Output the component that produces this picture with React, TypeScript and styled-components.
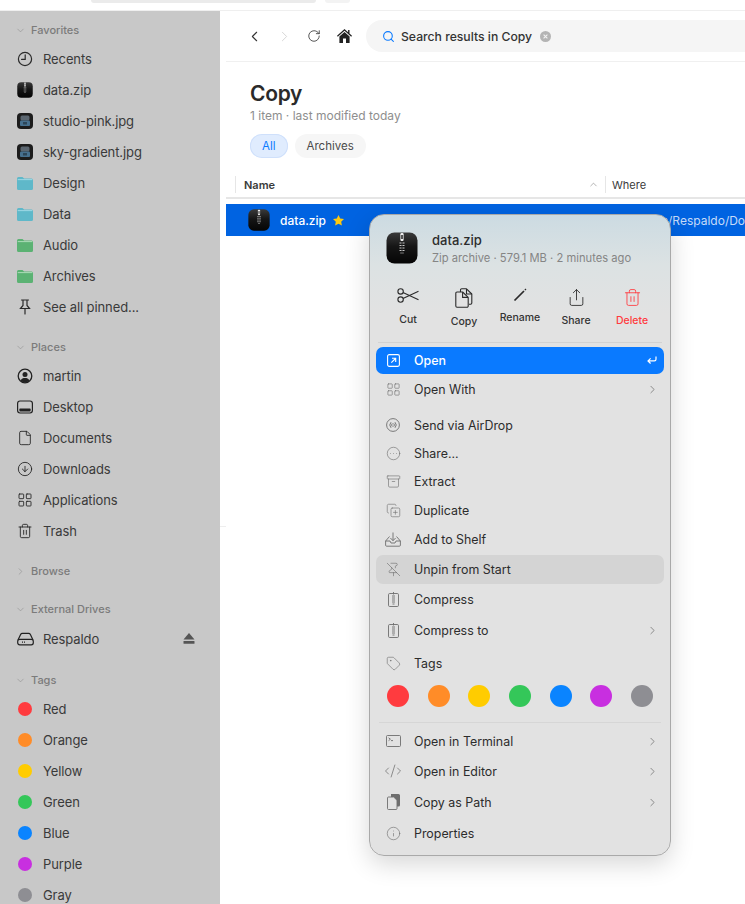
import styled, { createGlobalStyle } from "styled-components";
import {
  ArrowDownCircle,
  Archive,
  ChevronDown,
  ChevronLeft,
  ChevronRight,
  ChevronUp,
  CircleEllipsis,
  CodeXml,
  CopyPlus,
  File,
  Info,
  LayoutGrid,
  PinOff,
  RotateCw,
  Search,
  Share,
  Tag,
  Trash2,
} from "lucide-react";
import type { ReactNode } from "react";

const TAG_COLORS = ["#ff3b3f", "#ff8c28", "#ffcc00", "#34c759", "#0a84ff", "#c82fe0", "#8e8e93"];

const ZipIcon = ({ size }: { size: number }) => (
  <svg width={size} height={size} viewBox="0 0 32 32">
    <defs>
      <linearGradient id={`zip${size}`} x1="0" y1="0" x2="0" y2="1">
        <stop offset="0" stopColor="#3a3a3a" />
        <stop offset="0.45" stopColor="#161616" />
        <stop offset="1" stopColor="#050505" />
      </linearGradient>
    </defs>
    <rect x="0.5" y="0.5" width="31" height="31" rx="8" fill={`url(#zip${size})`} />
    <rect x="14.4" y="1" width="3.2" height="8" rx="1.2" fill="#f2f2f2" />
    <rect x="15" y="3" width="2" height="4" fill="#555" />
    <path d="M13.5 11h5M13.5 13.5h5M13.5 16h5M13.5 18.5h5M14.5 21h3" stroke="#c8c8c8" strokeWidth="1.1" />
    <path d="M16 10v12" stroke="#222" strokeWidth="1" />
  </svg>
);

const ImageFileIcon = () => (
  <svg width="16" height="16" viewBox="0 0 16 16">
    <rect x="0" y="0" width="16" height="16" rx="4" fill="#1c1c1c" />
    <rect x="3.5" y="2.5" width="9" height="5" rx="1.5" fill="#5b6670" />
    <rect x="3" y="7.5" width="10" height="5.5" rx="1" fill="#46708f" />
    <rect x="6" y="9" width="4" height="2.5" fill="#2d4659" />
  </svg>
);

const FolderIcon = ({ color, light }: { color: string; light: string }) => (
  <svg width="16" height="14" viewBox="0 0 16 14">
    <path d="M0 2.5A1.5 1.5 0 0 1 1.5 1h4l1.6 1.5h7.4A1.5 1.5 0 0 1 16 4v8.5a1.5 1.5 0 0 1-1.5 1.5h-13A1.5 1.5 0 0 1 0 12.5z" fill={color} />
    <rect x="0.7" y="3.2" width="14.6" height="0.9" fill={light} />
  </svg>
);

const ClockIcon = () => (
  <svg width="16" height="16" viewBox="0 0 16 16" fill="none" stroke="#2a2a2a" strokeWidth="1.2">
    <circle cx="8" cy="8" r="6.6" />
    <path d="M8.2 3.8v4.6H4.6" strokeLinecap="round" />
  </svg>
);

const PinIcon = () => (
  <svg width="14" height="16" viewBox="0 0 14 16" fill="none" stroke="#2a2a2a" strokeWidth="1.2" strokeLinecap="round">
    <path d="M3.5 1h7M5 1v5.5L2.5 9.5h9L9 6.5V1M7 9.5V15" />
  </svg>
);

const UserIcon = () => (
  <svg width="16" height="16" viewBox="0 0 16 16">
    <circle cx="8" cy="8" r="6.8" fill="none" stroke="#222" strokeWidth="1.3" />
    <circle cx="8" cy="6.4" r="2.5" fill="#222" />
    <path d="M3.6 12.6C4.6 10.6 6 10 8 10s3.4.6 4.4 2.6A6.4 6.4 0 0 1 8 14.6a6.4 6.4 0 0 1-4.4-2z" fill="#222" />
  </svg>
);

const DesktopIcon = () => (
  <svg width="16" height="14" viewBox="0 0 16 14" fill="none" stroke="#222" strokeWidth="1.2">
    <rect x="0.6" y="1" width="14.8" height="12" rx="2.4" />
    <rect x="2.4" y="8.6" width="11.2" height="2.8" rx="0.6" fill="#222" stroke="none" />
  </svg>
);

const DriveIcon = () => (
  <svg width="17" height="14" viewBox="0 0 17 14" fill="none" stroke="#222" strokeWidth="1.2">
    <path d="M1 8l2.6-5.6A2 2 0 0 1 5.4 1.3h6.2a2 2 0 0 1 1.8 1.1L16 8" />
    <rect x="0.7" y="7.4" width="15.6" height="5.4" rx="2" />
    <path d="M5 10.2h4" strokeDasharray="1 1" />
  </svg>
);

const EjectIcon = () => (
  <svg width="12" height="11" viewBox="0 0 12 11" fill="#555">
    <path d="M6 0l5.5 6.4H.5z" />
    <rect x="0.5" y="8" width="11" height="2.8" rx="0.6" />
  </svg>
);

const HomeIcon = () => (
  <svg width="15" height="14" viewBox="0 0 15 14" fill="#222">
    <path d="M7.5 0L0 6.8l.8.9 6.7-6 6.7 6 .8-.9-2.5-2.3V1h-1.4v2.2z" />
    <path d="M2.4 7.6L7.5 3l5.1 4.6V14H9V9.6H6V14H2.4z" />
  </svg>
);

const ClearIcon = () => (
  <svg width="11" height="11" viewBox="0 0 11 11">
    <circle cx="5.5" cy="5.5" r="5.5" fill="#b4b4b4" />
    <path d="M3.6 3.6l3.8 3.8M7.4 3.6L3.6 7.4" stroke="#f2f2f2" strokeWidth="1.1" />
  </svg>
);

const StarIcon = () => (
  <svg width="11" height="11" viewBox="0 0 11 11" fill="#ffc90e">
    <path d="M5.5 0l1.7 3.6 3.8.5-2.8 2.6.7 3.9-3.4-1.9-3.4 1.9.7-3.9L0 4.1l3.8-.5z" />
  </svg>
);

const ScissorsIcon = () => (
  <svg width="22" height="15" viewBox="0 0 22 15" fill="none" stroke="#2a2a2a" strokeWidth="1.1">
    <circle cx="3.6" cy="3.4" r="2.7" />
    <circle cx="3.6" cy="11.6" r="2.7" />
    <path d="M6 4.6l15.5 7.2M6 10.400l15.5-7.200" />
  </svg>
);

const CopyLargeIcon = () => (
  <svg width="18" height="20" viewBox="0 0 18 20" fill="none" stroke="#2a2a2a" strokeWidth="1.1" strokeLinejoin="round">
    <path d="M5.5 4V2a1.2 1.2 0 0 1 1.2-1.2h4.8L16.8 6v9a1.2 1.2 0 0 1-1.2 1.2H14" />
    <path d="M11.5 1v5h5.2" />
    <path d="M2 4h5.6l5.6 5.4v8.6a1.2 1.2 0 0 1-1.2 1.2H2A1.2 1.2 0 0 1 .8 18V5.2A1.2 1.2 0 0 1 2 4z" fill="#e2e2e2" />
    <path d="M7.6 4.2v5.2h5.4" />
  </svg>
);

const PencilIcon = () => (
  <svg width="14" height="14" viewBox="0 0 14 14" fill="none" stroke="#2a2a2a">
    <path d="M1.5 12.5L11 3" strokeWidth="1.7" />
    <path d="M11.8 2.2L13 1" strokeWidth="1.2" />
  </svg>
);

const OpenBoxIcon = () => (
  <svg width="13" height="13" viewBox="0 0 13 13" fill="none" stroke="#fff" strokeWidth="1.1">
    <rect x="0.6" y="0.6" width="11.8" height="11.8" rx="1.6" />
    <path d="M4.3 8.7l4.2-4.2M5 4.3h3.7V8" />
  </svg>
);

const ReturnIcon = () => (
  <svg width="10" height="9" viewBox="0 0 10 9" fill="none" stroke="#fff" strokeWidth="1.2">
    <path d="M9 .5v2.8a1.6 1.6 0 0 1-1.6 1.6H1.2M3.6 2.4L1 4.9l2.6 2.6" />
  </svg>
);

const AirDropIcon = () => (
  <svg width="14" height="14" viewBox="0 0 14 14" fill="none" stroke="#6e6e6e" strokeWidth="0.9">
    <circle cx="7" cy="7" r="6.4" />
    <path d="M5 4.2a4.2 4.2 0 0 0 0 5.6M9 4.2a4.2 4.2 0 0 1 0 5.6M6.3 5.4a2.4 2.4 0 0 0 0 3.2M7.7 5.4a2.4 2.4 0 0 1 0 3.2" />
  </svg>
);

const ShelfIcon = () => (
  <svg width="16" height="15" viewBox="0 0 16 15" fill="none" stroke="#6e6e6e" strokeWidth="0.9">
    <path d="M4.5 4.5L.6 9v4.2a1 1 0 0 0 1 1h12.8a1 1 0 0 0 1-1V9l-3.9-4.5" />
    <path d="M.6 9h4.4l1 2h4l1-2h4.4M8 .5v8M5.4 6L8 8.7 10.6 6" />
  </svg>
);

const CompressIcon = () => (
  <svg width="11" height="15" viewBox="0 0 11 15" fill="none" stroke="#6e6e6e" strokeWidth="0.9">
    <rect x="0.5" y="1.5" width="10" height="13" rx="1.2" />
    <path d="M5.5 0v2.5M4 4h3M4 6h3M4 8h3M4 10h3M4.5 12h2" />
  </svg>
);

const TerminalIcon = () => (
  <svg width="15" height="12" viewBox="0 0 15 12" fill="none" stroke="#6e6e6e" strokeWidth="0.9">
    <rect x="0.5" y="0.5" width="14" height="11" rx="1" />
    <path d="M2.6 2.8l1.8 1.4-1.8 1.4M5 5.6h2" />
  </svg>
);

const CopyPathIcon = () => (
  <svg width="13" height="16" viewBox="0 0 13 16">
    <path d="M4 0h7.5A1.5 1.5 0 0 1 13 1.5V11a1.5 1.5 0 0 1-1.5 1.500H4z" fill="#6e6e6e" />
    <path d="M1.500 3h5.200L10 6.300v8.200a1 1 0 0 1-1 1H1.500a1 1 0 0 1-1-1V4a1 1 0 0 1 1-1z" fill="#e2e2e2" stroke="#6e6e6e" strokeWidth="0.9" />
  </svg>
);

const menuIcon = { size: 15, strokeWidth: 1, color: "#6e6e6e" };
const sideIcon = { size: 16, strokeWidth: 1.3, color: "#222" };

const favorites: { label: string; icon: ReactNode }[] = [
  { label: "Recents", icon: <ClockIcon /> },
  { label: "data.zip", icon: <ZipIcon size={16} /> },
  { label: "studio-pink.jpg", icon: <ImageFileIcon /> },
  { label: "sky-gradient.jpg", icon: <ImageFileIcon /> },
  { label: "Design", icon: <FolderIcon color="#5fb8c9" light="#a5dbe6" /> },
  { label: "Data", icon: <FolderIcon color="#5fb8c9" light="#a5dbe6" /> },
  { label: "Audio", icon: <FolderIcon color="#5bb273" light="#b5e0c0" /> },
  { label: "Archives", icon: <FolderIcon color="#5bb273" light="#b5e0c0" /> },
  { label: "See all pinned...", icon: <PinIcon /> },
];

const places: { label: string; icon: ReactNode }[] = [
  { label: "martin", icon: <UserIcon /> },
  { label: "Desktop", icon: <DesktopIcon /> },
  { label: "Documents", icon: <File {...sideIcon} /> },
  { label: "Downloads", icon: <ArrowDownCircle {...sideIcon} /> },
  { label: "Applications", icon: <LayoutGrid {...sideIcon} /> },
  { label: "Trash", icon: <Trash2 {...sideIcon} /> },
];

const tags = ["Red", "Orange", "Yellow", "Green", "Blue", "Purple", "Gray"];

const upperRows: { label: string; icon: ReactNode; h: number; top?: number; arrow?: boolean; hover?: boolean }[] = [
  { label: "Open With", icon: <LayoutGrid {...menuIcon} />, h: 30, arrow: true },
  { label: "Send via AirDrop", icon: <AirDropIcon />, h: 28, top: 7 },
  { label: "Share...", icon: <CircleEllipsis {...menuIcon} />, h: 28 },
  { label: "Extract", icon: <Archive {...menuIcon} />, h: 28 },
  { label: "Duplicate", icon: <CopyPlus {...menuIcon} />, h: 30 },
  { label: "Add to Shelf", icon: <ShelfIcon />, h: 28 },
  { label: "Unpin from Start", icon: <PinOff {...menuIcon} />, h: 29, top: 2, hover: true },
  { label: "Compress", icon: <CompressIcon />, h: 30 },
  { label: "Compress to", icon: <CompressIcon />, h: 32, arrow: true },
  { label: "Tags", icon: <Tag {...menuIcon} />, h: 34 },
];

const lowerRows: { label: string; icon: ReactNode; h: number; arrow?: boolean }[] = [
  { label: "Open in Terminal", icon: <TerminalIcon />, h: 28, arrow: true },
  { label: "Open in Editor", icon: <CodeXml size={18} strokeWidth={1} color="#6e6e6e" />, h: 32, arrow: true },
  { label: "Copy as Path", icon: <CopyPathIcon />, h: 30, arrow: true },
  { label: "Properties", icon: <Info {...menuIcon} />, h: 32 },
];

const App = () => {
  return (
    <Page>
      <GlobalStyle />
      <TopStrip>
        <TabShape />
        <TabDot />
      </TopStrip>
      <Body>
        <Sidebar>
          <SectionHeader>
            <ChevronDown size={11} strokeWidth={1.2} color="#8a8a8a" />
            Favorites
          </SectionHeader>
          {favorites.map((item) => (
            <SideRow key={item.label}>
              <SideIcon>{item.icon}</SideIcon>
              {item.label}
            </SideRow>
          ))}
          <SectionHeader $gap={13}>
            <ChevronDown size={11} strokeWidth={1.2} color="#8a8a8a" />
            Places
          </SectionHeader>
          {places.map((item) => (
            <SideRow key={item.label}>
              <SideIcon>{item.icon}</SideIcon>
              {item.label}
            </SideRow>
          ))}
          <SectionHeader $gap={13}>
            <ChevronRight size={11} strokeWidth={1.2} color="#8a8a8a" />
            Browse
          </SectionHeader>
          <SectionHeader $gap={14} $after={2}>
            <ChevronDown size={11} strokeWidth={1.2} color="#8a8a8a" />
            External Drives
          </SectionHeader>
          <SideRow>
            <SideIcon>
              <DriveIcon />
            </SideIcon>
            Respaldo
            <Eject>
              <EjectIcon />
            </Eject>
          </SideRow>
          <SectionHeader $gap={14}>
            <ChevronDown size={11} strokeWidth={1.2} color="#8a8a8a" />
            Tags
          </SectionHeader>
          {tags.map((tag, index) => (
            <SideRow key={tag}>
              <SideIcon>
                <SideDot $color={TAG_COLORS[index]} />
              </SideIcon>
              {tag}
            </SideRow>
          ))}
        </Sidebar>
        <Main>
          <Toolbar>
            <NavButton>
              <ChevronLeft size={17} strokeWidth={1.5} color="#333" />
            </NavButton>
            <NavButton>
              <ChevronRight size={17} strokeWidth={1.2} color="#d0d0d0" />
            </NavButton>
            <NavButton>
              <RotateCw size={14} strokeWidth={1.4} color="#333" />
            </NavButton>
            <NavButton>
              <HomeIcon />
            </NavButton>
            <SearchBox>
              <Search size={13} strokeWidth={2} color="#0a7aff" />
              <SearchText>Search results in Copy</SearchText>
              <ClearIcon />
            </SearchBox>
          </Toolbar>
          <Heading>
            <Title>Copy</Title>
            <Subtitle>1 item · last modified today</Subtitle>
            <Chips>
              <Chip $active>All</Chip>
              <Chip>Archives</Chip>
            </Chips>
          </Heading>
          <TableHeader>
            <NameColumn>
              Name
              <SortIcon>
                <ChevronUp size={11} strokeWidth={1.2} color="#777" />
              </SortIcon>
            </NameColumn>
            <WhereColumn>Where</WhereColumn>
          </TableHeader>
          <SelectedRow>
            <NameCell>
              <ZipIcon size={22} />
              <FileName>data.zip</FileName>
              <StarIcon />
            </NameCell>
            <WhereCell>/Volumes/Respaldo/Documents</WhereCell>
          </SelectedRow>
        </Main>
      </Body>
      <Menu>
        <MenuHeader>
          <ZipIcon size={32} />
          <div>
            <MenuFileName>data.zip</MenuFileName>
            <MenuFileMeta>Zip archive · 579.1 MB · 2 minutes ago</MenuFileMeta>
          </div>
        </MenuHeader>
        <Actions>
          <Action>
            <ActionIcon $h={25}>
              <ScissorsIcon />
            </ActionIcon>
            Cut
          </Action>
          <Action>
            <ActionIcon $h={27}>
              <CopyLargeIcon />
            </ActionIcon>
            Copy
          </Action>
          <Action>
            <ActionIcon $h={23}>
              <PencilIcon />
            </ActionIcon>
            Rename
          </Action>
          <Action>
            <ActionIcon $h={26}>
              <Share size={19} strokeWidth={1.1} color="#2a2a2a" />
            </ActionIcon>
            Share
          </Action>
          <Action $danger>
            <ActionIcon $h={26}>
              <Trash2 size={19} strokeWidth={1.1} color="#ff3b3f" />
            </ActionIcon>
            Delete
          </Action>
        </Actions>
        <MenuDivider />
        <OpenRow>
          <RowIcon>
            <OpenBoxIcon />
          </RowIcon>
          Open
          <RowEnd>
            <ReturnIcon />
          </RowEnd>
        </OpenRow>
        {upperRows.map((row) => (
          <MenuRow key={row.label} $h={row.h} $top={row.top} $hover={row.hover}>
            <RowIcon>{row.icon}</RowIcon>
            {row.label}
            {row.arrow && (
              <RowEnd>
                <ChevronRight size={13} strokeWidth={1.3} color="#666" />
              </RowEnd>
            )}
          </MenuRow>
        ))}
        <TagDots>
          {TAG_COLORS.map((color) => (
            <TagDot key={color} $color={color} />
          ))}
        </TagDots>
        <LowerDivider />
        {lowerRows.map((row) => (
          <MenuRow key={row.label} $h={row.h}>
            <RowIcon>{row.icon}</RowIcon>
            {row.label}
            {row.arrow && (
              <RowEnd>
                <ChevronRight size={13} strokeWidth={1.3} color="#666" />
              </RowEnd>
            )}
          </MenuRow>
        ))}
      </Menu>
    </Page>
  );
};

export default App;

const GlobalStyle = createGlobalStyle`
  html, body {
    margin: 0;
    padding: 0;
    background: #fff;
  }
  body {
    font-family: Inter, "Liberation Sans", sans-serif;
    -webkit-font-smoothing: antialiased;
  }
  * {
    box-sizing: border-box;
  }
`;

const Page = styled.div`
  position: relative;
  width: 745px;
  height: 904px;
  overflow: hidden;
  display: flex;
  flex-direction: column;
`;

const TopStrip = styled.div`
  height: 11px;
  flex-shrink: 0;
  display: flex;
  align-items: flex-start;
  gap: 9px;
  padding-left: 91px;
  border-bottom: 1px solid #efefef;
`;

const TabShape = styled.div`
  width: 225px;
  height: 3px;
  background: #ebebeb;
  border-radius: 0 0 8px 8px;
`;

const TabDot = styled.div`
  width: 25px;
  height: 3px;
  background: #f3f3f3;
  border-radius: 0 0 8px 8px;
`;

const Body = styled.div`
  flex: 1;
  display: flex;
  min-height: 0;
`;

const Sidebar = styled.aside`
  width: 220px;
  flex-shrink: 0;
  background: #c8c8c8;
  padding-top: 7px;
  overflow: hidden;
`;

const SectionHeader = styled.div<{ $gap?: number; $after?: number }>`
  height: 24px;
  margin-top: ${(p) => p.$gap ?? 0}px;
  margin-bottom: ${(p) => p.$after ?? 1}px;
  padding-left: 15px;
  display: flex;
  align-items: center;
  gap: 5px;
  font-size: 11px;
  font-weight: 500;
  color: #7b7b7b;
`;

const SideRow = styled.div`
  height: 31px;
  padding: 0 25px 0 15px;
  display: flex;
  align-items: center;
  gap: 8px;
  font-size: 13px;
  letter-spacing: -0.1px;
  color: #3a3a3a;
`;

const SideIcon = styled.span`
  width: 20px;
  height: 20px;
  flex-shrink: 0;
  display: flex;
  align-items: center;
  justify-content: center;
`;

const SideDot = styled.span<{ $color: string }>`
  width: 14px;
  height: 14px;
  border-radius: 50%;
  background: ${(p) => p.$color};
`;

const Eject = styled.span`
  margin-left: auto;
  display: flex;
`;

const Main = styled.main`
  position: relative;
  flex: 1;
  min-width: 0;
  padding-left: 6px;

  &::before {
    content: "";
    position: absolute;
    left: 0;
    top: 515px;
    width: 6px;
    height: 1px;
    background: #eeeeee;
  }
`;

const Toolbar = styled.div`
  height: 51px;
  padding: 9px 0 0 13px;
  display: flex;
  align-items: flex-start;
  border-bottom: 1px solid #f0f0f0;
`;

const NavButton = styled.span`
  width: 30px;
  height: 32px;
  display: flex;
  align-items: center;
  justify-content: center;
`;

const SearchBox = styled.div`
  flex: 1;
  height: 32px;
  margin-left: 7px;
  padding-left: 16px;
  display: flex;
  align-items: center;
  background: #f5f5f5;
  border-radius: 16px 0 0 16px;
`;

const SearchText = styled.span`
  margin: 0 8px 0 6px;
  font-size: 12.2px;
  font-weight: 500;
  color: #333;
`;

const Heading = styled.div`
  padding: 19px 0 0 24px;
  height: 114px;
`;

const Title = styled.div`
  font-size: 21px;
  line-height: 26px;
  font-weight: 600;
  letter-spacing: -0.3px;
  color: #2a2a2a;
`;

const Subtitle = styled.div`
  font-size: 12px;
  line-height: 18px;
  color: #8e8e8e;
`;

const Chips = styled.div`
  display: flex;
  gap: 7px;
  margin-top: 9px;
`;

const Chip = styled.span<{ $active?: boolean }>`
  height: 24px;
  padding: 0 12px;
  display: flex;
  align-items: center;
  font-size: 11.5px;
  border-radius: 12px;
  color: ${(p) => (p.$active ? "#0a7aff" : "#4a4a4a")};
  background: ${(p) => (p.$active ? "#e0ecfe" : "#f6f6f6")};
  box-shadow: ${(p) => (p.$active ? "inset 0 0 0 1px #cfe0fb" : "none")};
`;

const TableHeader = styled.div`
  box-sizing: content-box;
  height: 21px;
  display: flex;
  align-items: stretch;
  border-bottom: 2px solid #e6e6e6;
  font-size: 11px;
  font-weight: 500;
  color: #3a3a3a;
`;

const NameColumn = styled.div`
  width: 371px;
  margin: 0 0 4px 9px;
  padding: 0 6px 0 8px;
  display: flex;
  align-items: center;
  justify-content: space-between;
  border-left: 1px solid #e6e6e6;
  border-right: 1px solid #e6e6e6;
  font-weight: 600;
`;

const SortIcon = styled.span`
  display: flex;
`;

const WhereColumn = styled.div`
  padding-left: 6px;
  display: flex;
  align-items: center;
  font-weight: 400;
  margin-bottom: 4px;
`;

const SelectedRow = styled.div`
  height: 32px;
  margin-top: 5px;
  display: flex;
  align-items: center;
  overflow: hidden;
  background: #0063e1;
  color: #fff;
`;

const NameCell = styled.div`
  width: 386px;
  flex-shrink: 0;
  padding-left: 22px;
  display: flex;
  align-items: center;
`;

const FileName = styled.span`
  margin: 0 7px 0 10px;
  font-size: 12px;
  font-weight: 500;
`;

const WhereCell = styled.div`
  padding-left: 3px;
  font-size: 12px;
  white-space: nowrap;
  color: #c6dbf8;
`;

const Menu = styled.div`
  position: absolute;
  left: 369px;
  top: 214px;
  width: 302px;
  height: 642px;
  padding: 0 6px;
  border: 1px solid #a9a9a9;
  border-radius: 15px;
  background: linear-gradient(180deg, #ccdbe2 0, #dce2e3 50px, #e2e2e2 100px);
  box-shadow: 0 8px 24px rgba(0, 0, 0, 0.16);
  font-size: 12.4px;
  color: #2c2c2c;
`;

const MenuHeader = styled.div`
  height: 73px;
  padding: 17px 0 0 10px;
  display: flex;
  gap: 14px;
`;

const MenuFileName = styled.div`
  font-size: 13px;
  line-height: 17px;
  font-weight: 500;
  color: #2c2c2c;
`;

const MenuFileMeta = styled.div`
  margin-top: 2px;
  font-size: 11.2px;
  line-height: 14px;
  color: #858585;
`;

const Actions = styled.div`
  height: 54px;
  padding-left: 4px;
  display: flex;
`;

const Action = styled.div<{ $danger?: boolean }>`
  width: 56px;
  display: flex;
  flex-direction: column;
  align-items: center;
  font-size: 10.5px;
  line-height: 14px;
  font-weight: 500;
  color: ${(p) => (p.$danger ? "#ff3b3f" : "#333")};
`;

const ActionIcon = styled.span<{ $h: number }>`
  height: ${(p) => p.$h}px;
  display: flex;
  align-items: flex-start;
  justify-content: center;
`;

const MenuDivider = styled.div`
  height: 1px;
  margin: 0 2px 4px;
  background: #d2d2d2;
`;

const RowIcon = styled.span`
  width: 24px;
  height: 20px;
  margin-right: 9px;
  flex-shrink: 0;
  display: flex;
  align-items: center;
  justify-content: center;
`;

const RowEnd = styled.span`
  margin-left: auto;
  display: flex;
  align-items: center;
`;

const OpenRow = styled.div`
  height: 27px;
  padding: 0 7px 0 5px;
  display: flex;
  align-items: center;
  border-radius: 7px;
  background: #0a7aff;
  color: #fff;
  font-weight: 500;
`;

const MenuRow = styled.div<{ $h: number; $top?: number; $hover?: boolean }>`
  height: ${(p) => p.$h}px;
  margin-top: ${(p) => p.$top ?? 0}px;
  padding: 0 5px;
  display: flex;
  align-items: center;
  border-radius: 7px;
  background: ${(p) => (p.$hover ? "#d4d4d4" : "transparent")};
`;

const TagDots = styled.div`
  margin-top: 5px;
  padding: 0 11px;
  display: flex;
  justify-content: space-between;
`;

const TagDot = styled.span<{ $color: string }>`
  width: 22px;
  height: 22px;
  border-radius: 50%;
  background: ${(p) => p.$color};
`;

const LowerDivider = styled.div`
  height: 1px;
  margin: 15px 3px 4px;
  background: #d6d6d6;
`;
